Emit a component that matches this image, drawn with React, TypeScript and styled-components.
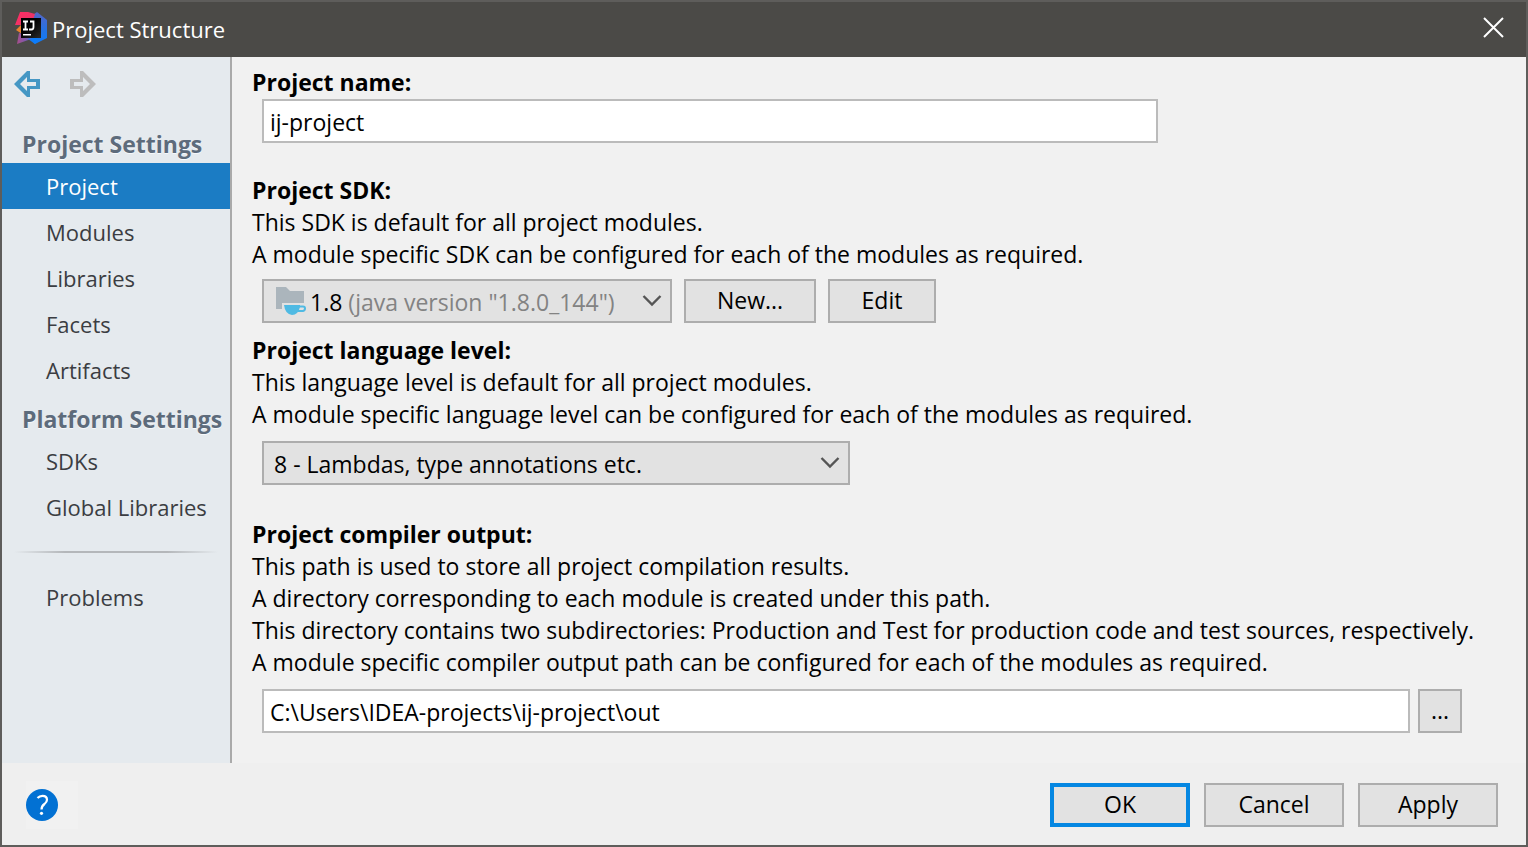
import React, { useState } from "react";
import styled, { createGlobalStyle, css } from "styled-components";

const GlobalStyle = createGlobalStyle`
  *, *::before, *::after { box-sizing: border-box; }
  body {
    margin: 0;
    background: #f1f1f1;
    color: #000;
    font-family: "Open Sans", "Noto Sans", sans-serif;
    font-size: 23px;
    line-height: 32px;
  }
  button, input, select { font: inherit; color: inherit; margin: 0; }
  p, h1, h2, ul { margin: 0; padding: 0; }
`;

const Dialog = styled.div`
  display: flex;
  flex-direction: column;
  min-height: 100vh;
  border: 2px solid #5e5d5b;
`;

const TitleBar = styled.header`
  display: flex;
  align-items: center;
  height: 55px;
  padding: 0 21px 3px 12px;
  gap: 4px;
  background: #4b4a47;
  color: #fff;
`;

const Title = styled.h1`
  flex: 1;
  padding-top: 2px;
  font-size: 22px;
  font-weight: 400;
`;

const IconButton = styled.button`
  display: flex;
  padding: 0;
  border: 0;
  background: none;
`;

const Body = styled.div`
  display: flex;
  flex: 1;
`;

const Sidebar = styled.nav`
  flex: none;
  width: 230px;
  border-right: 2px solid #aaa;
  background: #e5eaee;
  color: #3b3d42;
`;

const History = styled.div`
  display: flex;
  gap: 28px;
  padding: 13px 11px 29px;
`;

const GroupTitle = styled.h2`
  padding: 0 0 2px 20px;
  color: #5d6b7b;
  font-size: 23px;
  font-weight: 700;
  line-height: 34px;
  white-space: nowrap;
  text-shadow: 0 1px 0 #f6f9fb;
`;

const Group = styled.ul`
  list-style: none;
  padding-bottom: 9px;
  font-size: 22px;
`;

const NavLink = styled.a<{ $active?: boolean }>`
  display: block;
  padding-left: 44px;
  color: inherit;
  line-height: 46px;
  text-decoration: none;
  ${(p) => p.$active && css`background: #1b7cc4; color: #fff;`}
`;

const Separator = styled.hr`
  height: 2px;
  margin: 12px 12px 21px;
  border: 0;
  background: linear-gradient(90deg, #e5eaee, #b4b7ba 25%, #b4b7ba 75%, #e5eaee);
`;

const Content = styled.main`
  flex: 1;
  min-width: 0;
  padding: 9px 48px 30px 20px;
`;

const Section = styled.section<{ $after: number }>`
  margin-bottom: ${(p) => p.$after}px;
`;

const SectionTitle = styled.label`
  display: block;
  font-weight: 700;
`;

const Controls = styled.div<{ $before: number; $gap?: number }>`
  display: flex;
  gap: ${(p) => p.$gap ?? 0}px;
  padding: ${(p) => p.$before}px 16px 0 10px;
`;

const TextField = styled.input`
  flex: 1;
  min-width: 0;
  height: 44px;
  padding: 2px 6px 0;
  border: 2px solid #bbb;
  border-radius: 0;
  background: #fff;
`;

const NameField = styled(TextField)`
  flex: 0 1 896px;
`;

const Button = styled.button<{ $width: number; $primary?: boolean }>`
  width: ${(p) => p.$width}px;
  height: 44px;
  padding: 0 0 2px;
  border: ${(p) => (p.$primary ? "4px solid #0587e2" : "2px solid #adadad")};
  background: #e2e2e2;
`;

const Combo = styled.div<{ $width: number }>`
  display: flex;
  align-items: center;
  width: ${(p) => p.$width}px;
  height: 44px;
  padding: 0 8px 0 10px;
  border: 2px solid #adadad;
  background: #e2e2e2;
`;

const Select = styled.select<{ $muted?: boolean }>`
  flex: 1;
  min-width: 0;
  padding: 2px 0 0;
  border: 0;
  appearance: none;
  background: none;
  color: ${(p) => (p.$muted ? "#838383" : "#000")};
`;

const SdkVersion = styled.span`
  margin: 0 6px 0 4px;
  padding-top: 2px;
`;

const Footer = styled.footer`
  display: flex;
  align-items: center;
  gap: 14px;
  padding: 18px 28px 16px 24px;
  background: #efefef;
`;

const HelpSlot = styled.div`
  display: flex;
  align-items: center;
  width: 52px;
  height: 48px;
  margin-right: auto;
  background: #f1f1f1;
`;

const Logo = () => (
  <svg width="34" height="34" viewBox="0 0 34 34" aria-hidden="true">
    <defs>
      <linearGradient id="pink" x1="0" y1="0" x2="1" y2="1">
        <stop offset="0" stopColor="#ff2d62" />
        <stop offset="1" stopColor="#e0386b" />
      </linearGradient>
      <linearGradient id="blue" x1="0" y1="0" x2="0" y2="1">
        <stop offset="0" stopColor="#5564c4" />
        <stop offset=".6" stopColor="#2273e4" />
        <stop offset="1" stopColor="#0b7dfb" />
      </linearGradient>
      <linearGradient id="purple" x1="0" y1="0" x2="1" y2="0">
        <stop offset="0" stopColor="#a84e8b" />
        <stop offset=".45" stopColor="#7b5bb0" />
        <stop offset=".75" stopColor="#0b7dfb" />
      </linearGradient>
      <linearGradient id="plate" x1="0" y1="0" x2="1" y2="1">
        <stop offset=".4" stopColor="#000" />
        <stop offset="1" stopColor="#2a2a2a" />
      </linearGradient>
    </defs>
    <path d="M23 1L33 9V27L21 33L10 25V10Z" fill="url(#blue)" />
    <path d="M6 1H14L21 3L19 9L7 20V14H1Z" fill="url(#pink)" />
    <path d="M2 19L8 13V23Z" fill="#e8812c" />
    <path d="M5 22L3 33L17 28L21 33L24 26Z" fill="url(#purple)" />
    <path d="M7 7h20v20H7z" fill="url(#plate)" />
    <path d="M9 10.500h5M11.500 10.500v8M9 18.500h5M16 10.500H19.500v5.500q0 2.500-2 2.500h-2.500" fill="none" stroke="#fff" strokeWidth="1.800" />
    <path d="M9 23h8v1.500H9z" fill="#fff" />
  </svg>
);

const HistoryArrow = ({ forward }: { forward?: boolean }) => (
  <svg width="28" height="28" viewBox="0 0 28 28" aria-hidden="true">
    <g transform={forward ? "translate(28 0) scale(-1 1)" : undefined}>
      <path
        d="M1 14L14 1H17V9H27V19H17V27H14ZM7 14L14 21V16H23V12H14V7Z"
        fill={forward ? "#bdbdbd" : "#4597c4"}
        fillRule="evenodd"
      />
    </g>
  </svg>
);

const CloseIcon = () => (
  <svg width="22" height="22" viewBox="0 0 22 22" aria-hidden="true">
    <path d="M1 1L20 20M20 1L1 20" stroke="#fff" strokeWidth="2" />
  </svg>
);

const SdkIcon = () => (
  <svg width="32" height="28" viewBox="0 0 32 28" aria-hidden="true">
    <path d="M2 0H12L16 4H30V16H8V22H2Z" fill="#abb5bc" />
    <path d="M10 18H26V20Q24 28 18 28Q11 27 10 18Z" fill="#4fbae3" />
    <path d="M25 19.500H29Q31 19.500 31 21.500T29 24H24" fill="none" stroke="#4fbae3" strokeWidth="2" />
  </svg>
);

const Chevron = () => (
  <svg width="20" height="14" viewBox="0 0 20 14" aria-hidden="true">
    <path d="M1.500 2L10 10.500L18.500 2" fill="none" stroke="#555" strokeWidth="2.400" />
  </svg>
);

const HelpIcon = () => (
  <svg width="32" height="32" viewBox="0 0 32 32" aria-hidden="true">
    <circle cx="16" cy="16" r="16" fill="#0271d3" />
    <path d="M11.500 9Q13.500 6.800 16.500 6.800Q21 6.800 21 10.800Q21 13 18.500 15Q15.500 17.200 15.500 20.500" fill="none" stroke="#fff" strokeWidth="2.200" />
    <circle cx="15.500" cy="24.300" r="1.600" fill="#fff" />
  </svg>
);

const projectPages = ["Project", "Modules", "Libraries", "Facets", "Artifacts"];
const platformPages = ["SDKs", "Global Libraries"];

export default function App() {
  const [page, setPage] = useState("Project");
  const [name, setName] = useState("ij-project");
  const [output, setOutput] = useState("C:\\Users\\IDEA-projects\\ij-project\\out");

  const renderLink = (item: string) => (
    <li key={item}>
      <NavLink
        href={"#" + item}
        $active={item === page}
        aria-current={item === page ? "page" : undefined}
        onClick={() => setPage(item)}
      >
        {item}
      </NavLink>
    </li>
  );

  return (
    <>
      <GlobalStyle />
      <Dialog>
        <TitleBar>
          <Logo />
          <Title>Project Structure</Title>
          <IconButton aria-label="Close"><CloseIcon /></IconButton>
        </TitleBar>
        <Body>
          <Sidebar>
            <History>
              <IconButton aria-label="Back"><HistoryArrow /></IconButton>
              <IconButton aria-label="Forward" disabled><HistoryArrow forward /></IconButton>
            </History>
            <GroupTitle>Project Settings</GroupTitle>
            <Group>{projectPages.map(renderLink)}</Group>
            <GroupTitle>Platform Settings</GroupTitle>
            <Group>{platformPages.map(renderLink)}</Group>
            <Separator />
            <Group>{renderLink("Problems")}</Group>
          </Sidebar>
          <Content>
            <Section $after={31}>
              <SectionTitle htmlFor="name">Project name:</SectionTitle>
              <Controls $before={1}>
                <NameField id="name" value={name} onChange={(e) => setName(e.target.value)} />
              </Controls>
            </Section>
            <Section $after={11}>
              <SectionTitle htmlFor="sdk">Project SDK:</SectionTitle>
              <p>This SDK is default for all project modules.</p>
              <p>A module specific SDK can be configured for each of the modules as required.</p>
              <Controls $before={9} $gap={12}>
                <Combo $width={410}>
                  <SdkIcon />
                  <SdkVersion>1.8</SdkVersion>
                  <Select id="sdk" $muted>
                    <option>(java version "1.8.0_144")</option>
                  </Select>
                  <Chevron />
                </Combo>
                <Button $width={132}>New...</Button>
                <Button $width={108}>Edit</Button>
              </Controls>
            </Section>
            <Section $after={33}>
              <SectionTitle htmlFor="level">Project language level:</SectionTitle>
              <p>This language level is default for all project modules.</p>
              <p>A module specific language level can be configured for each of the modules as required.</p>
              <Controls $before={11}>
                <Combo $width={588}>
                  <Select id="level">
                    <option>8 - Lambdas, type annotations etc.</option>
                  </Select>
                  <Chevron />
                </Combo>
              </Controls>
            </Section>
            <Section $after={0}>
              <SectionTitle htmlFor="output">Project compiler output:</SectionTitle>
              <p>This path is used to store all project compilation results.</p>
              <p>A directory corresponding to each module is created under this path.</p>
              <p>This directory contains two subdirectories: Production and Test for production code and test sources, respectively.</p>
              <p>A module specific compiler output path can be configured for each of the modules as required.</p>
              <Controls $before={11} $gap={8}>
                <TextField id="output" value={output} onChange={(e) => setOutput(e.target.value)} />
                <Button $width={44} aria-label="Browse">...</Button>
              </Controls>
            </Section>
          </Content>
        </Body>
        <Footer>
          <HelpSlot>
            <IconButton aria-label="Help"><HelpIcon /></IconButton>
          </HelpSlot>
          <Button $width={140} $primary>OK</Button>
          <Button $width={140}>Cancel</Button>
          <Button $width={140}>Apply</Button>
        </Footer>
      </Dialog>
    </>
  );
}
